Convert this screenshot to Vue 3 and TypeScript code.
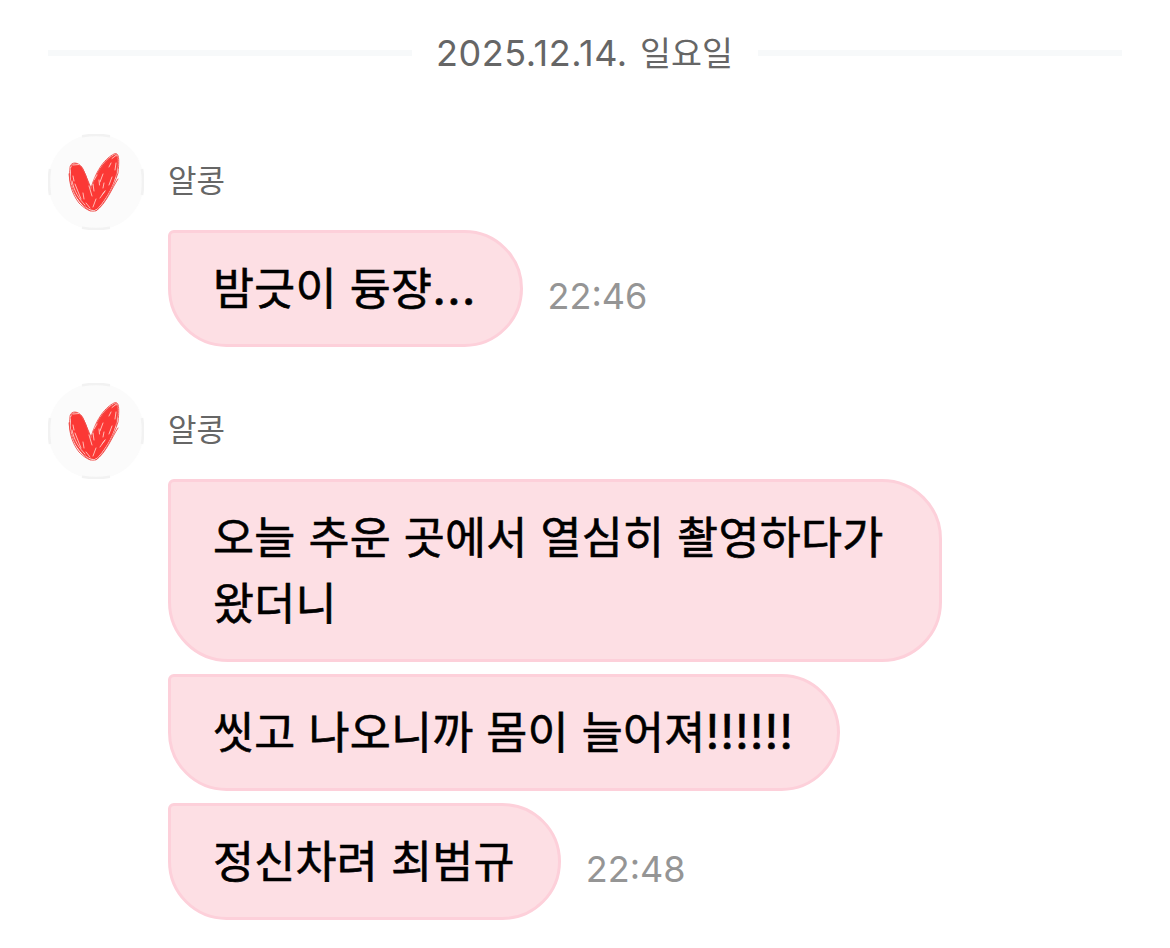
<script setup lang="ts">
interface Run {
  text: string
  latin?: boolean
}
interface Message {
  runs: Run[]
  time?: string
}
interface Group {
  id: number
  sender: string
  messages: Message[]
}

const groups: Group[] = [
  {
    id: 1,
    sender: '알콩',
    messages: [{ runs: [{ text: '밤긋이 듕쟝' }, { text: '...', latin: true }], time: '22:46' }],
  },
  {
    id: 2,
    sender: '알콩',
    messages: [
      { runs: [{ text: '오늘 추운 곳에서 열심히 촬영하다가 왔더니' }] },
      { runs: [{ text: '씻고 나오니까 몸이 늘어져' }, { text: '!!!!!!', latin: true }] },
      { runs: [{ text: '정신차려 최범규' }], time: '22:48' },
    ],
  },
]
</script>

<template>
  <main class="chat">
    <div class="date">
      <span class="rule"></span>
      <span class="date-text"><span class="digits">2025.12.14.</span><span class="weekday">일요일</span></span>
      <span class="rule"></span>
    </div>

    <section v-for="group in groups" :key="group.id" class="group">
      <header class="sender">
        <svg class="avatar" viewBox="0 0 96 96" aria-hidden="true">
          <circle cx="48" cy="48" r="48" fill="#fbfbfb" />
          <path d="M34 2.200Q48 -.2 62 2.200M34 93.800Q48 96.200 62 93.800M2 35Q0 48 2 61M94 35Q96 48 94 61" fill="none" stroke="#f2f2f2" stroke-width="2.600" />
          <path d="M23 34C24 28 31 29 34 34C38 40 40 48 43 55C47 41 54 28 64 22C70 18 71 27 69 36C67 50 58 65 51 73C47 78 42 76 38 73C28 67 24 54 22.500 43Z" fill="#fb3835" />
          <g fill="none" stroke="#f04a46" stroke-width=".9" stroke-linecap="round">
            <path d="M22 35C21 27 31 27 35 35L43 54C49 34 58 24 66 20C72 17 71 29 70 39C65 54 57 69 49 76C43 80 35 73 31 69C23 59 20 45 22 35" />
            <path d="M23 32C29 26 34 32 38 42L43 58M45 52C50 35 60 25 68 20C72 24 68 38 68 43M21 40C22 54 30 69 42 77M48 77C58 70 64 54 70 45" />
          </g>
          <g fill="none" stroke="#ffc9c3" stroke-width=".9" stroke-linecap="round">
            <path d="M25 31L31 30.500M24 47C26 57 31 65 37 71M27 50L33 65M41 52L44 62M45 50L46 57M51 46L51.500 51M55 40L52 48M64 24.500L68 21.500M63 29L61 33M64 43L61 51M57 57L52 64M48 65L45 73M38 69L42 74M54 61L57 57M25 42L26 47M68 29L67 36M46 46L49 41M56 49L55 54M35 59L36 65" />
          </g>
        </svg>
        <span class="name">{{ group.sender }}</span>
      </header>
      <div class="messages">
        <div v-for="(message, index) in group.messages" :key="index" class="row">
          <p class="bubble"><span v-for="(run, r) in message.runs" :key="r" :class="{ latin: run.latin }">{{ run.text }}</span></p>
          <time v-if="message.time" class="time">{{ message.time }}</time>
        </div>
      </div>
    </section>
  </main>
</template>

<style>
body {
  margin: 0;
  background: #fff;
}
</style>

<style scoped>
.chat {
  box-sizing: border-box;
  width: 1170px;
  height: 948px;
  padding: 23px 48px 0;
  overflow: hidden;
  background: #fff;
  font-family: Inter, "Noto Sans CJK KR", sans-serif;
}
.date {
  display: flex;
  align-items: center;
  gap: 25px;
  height: 60px;
}
.rule {
  flex: 1;
  height: 6px;
  background: #f7f9fa;
}
.date-text {
  display: flex;
  align-items: baseline;
  justify-content: space-between;
  width: 296px;
  padding-bottom: 2px;
  color: #666;
  line-height: 58px;
  white-space: nowrap;
}
.digits {
  margin-left: -1px;
  font-size: 36px;
  letter-spacing: 0.55px;
}
.weekday {
  font-family: "Noto Sans CJK KR", sans-serif;
  font-size: 33.7px;
}
.group {
  margin-top: 51px;
}
.group + .group {
  margin-top: 36px;
}
.sender {
  display: flex;
  align-items: center;
  gap: 24px;
  height: 96px;
}
.avatar {
  width: 96px;
  height: 96px;
}
.name {
  padding-bottom: 6px;
  color: #666;
  font-family: "Noto Sans CJK KR", sans-serif;
  font-size: 31px;
  line-height: 40px;
}
.messages {
  display: flex;
  flex-direction: column;
  gap: 12px;
  padding-left: 120px;
}
.row {
  display: flex;
  align-items: flex-end;
  gap: 25px;
}
.bubble {
  box-sizing: border-box;
  max-width: 774px;
  margin: 0;
  padding: 19.5px 43px 25.5px 42px;
  border: 3px solid #fdd0da;
  border-radius: 6px 60px 60px 60px;
  background: #fddfe4;
  color: #000;
  font-family: "Noto Sans CJK KR", sans-serif;
  font-size: 44.6px;
  font-weight: 400;
  line-height: 66px;
  letter-spacing: 0.25px;
  word-break: keep-all;
  word-spacing: 2.6px;
  -webkit-text-stroke: 0.6px #000;
}
.latin {
  font-family: Inter, sans-serif;
  font-size: 48px;
  line-height: 1;
  letter-spacing: 0.95px;
}
.time {
  margin-bottom: 29px;
  color: #959595;
  font-size: 36px;
  line-height: 44px;
}
</style>
